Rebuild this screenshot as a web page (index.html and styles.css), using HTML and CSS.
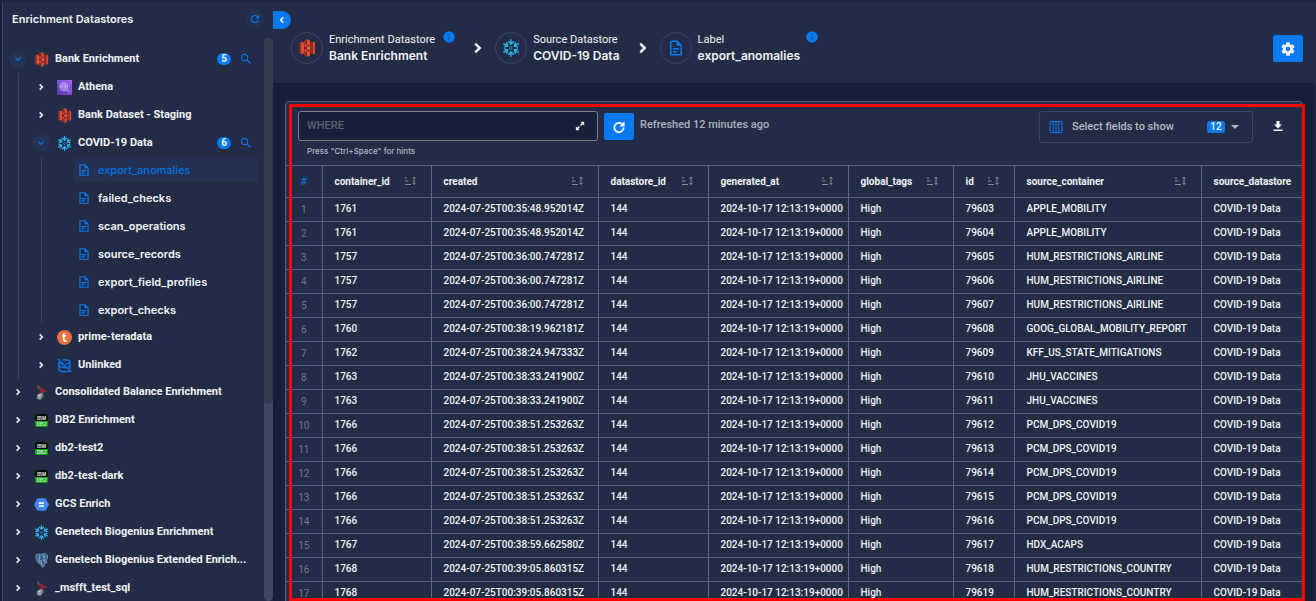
FILE: index.html
```html
<!DOCTYPE html>
<html lang="en">
<head>
<meta charset="utf-8">
<title>export_anomalies</title>
<link rel="stylesheet" href="styles.css">
</head>
<body>
<svg class="sprite" aria-hidden="true">
  <symbol id="down" viewBox="0 0 24 24"><path fill="currentColor" d="M7.400 8.600 12 13.200l4.600-4.600L18 10l-6 6-6-6z"/></symbol>
  <symbol id="right" viewBox="0 0 24 24"><path fill="none" stroke="currentColor" stroke-width="4.600" d="M8 4l8 8-8 8"/></symbol>
  <symbol id="left" viewBox="0 0 24 24"><path fill="none" stroke="currentColor" stroke-width="4.600" d="M16 4l-8 8 8 8"/></symbol>
  <symbol id="refresh" viewBox="0 0 24 24"><path fill="currentColor" d="M17.650 6.350A7.950 7.950 0 0 0 12 4a8 8 0 1 0 7.730 10h-2.080A6 6 0 1 1 12 6c1.660 0 3.140.69 4.220 1.780L13 11h7V4z"/></symbol>
  <symbol id="refresh-bold" viewBox="0 0 24 24"><path fill="none" stroke="currentColor" stroke-width="3.200" d="M18 7.500A8 8 0 1 0 20 13"/><path fill="currentColor" d="M21.500 2v9h-9z"/></symbol>
  <symbol id="search" viewBox="0 0 24 24"><path fill="currentColor" d="M9.500 3a6.500 6.500 0 0 1 4.940 10.730l.27.27h.79l5 5-1.500 1.500-5-5v-.79l-.27-.27A6.500 6.500 0 1 1 9.500 3m0 2a4.500 4.500 0 1 0 0 9 4.500 4.500 0 0 0 0-9"/></symbol>
  <symbol id="doc" viewBox="0 0 24 24"><path fill="currentColor" d="M6 2a2 2 0 0 0-2 2v16a2 2 0 0 0 2 2h12a2 2 0 0 0 2-2V8l-6-6zm0 2h7v5h5v11H6zm2 8v2h8v-2zm0 4v2h5v-2z"/></symbol>
  <symbol id="s3" viewBox="0 0 24 24"><path fill="#8c2b24" d="M1.500 5 4 3.800v16.400L1.500 19z"/><path fill="#dc4e3c" d="M4 3.800 12 6v12l-8 2.200z"/><path fill="#98291f" d="M12 6l8-2.200v16.400L12 18z"/><path fill="#dc4e3c" d="M20 3.800 22.500 5v14L20 20.200z"/><path fill="#98291f" d="M8 2l4-2v7l-4 1zM8 22l4 2v-7l-4-1z"/><path fill="#dc4e3c" d="M12 0l4 2v6l-4-1zM12 24l4-2v-6l-4 1z"/><path fill="#7b241e" d="M8 9.500l4 .7v3.600l-4 .7z"/><path fill="#e0604c" d="M12 10.200l4-.7v5l-4-.7z"/></symbol>
  <symbol id="snow" viewBox="0 0 24 24"><g fill="none" stroke="#29b5e8" stroke-width="2" stroke-linecap="round" stroke-linejoin="round"><path id="arm" d="M12 1v5.800M8.900 3.600 12 6.800l3.100-3.200"/><use href="#arm" transform="rotate(60 12 12)"/><use href="#arm" transform="rotate(120 12 12)"/><use href="#arm" transform="rotate(180 12 12)"/><use href="#arm" transform="rotate(240 12 12)"/><use href="#arm" transform="rotate(300 12 12)"/></g><path fill="none" stroke="#29b5e8" stroke-width="1.200" d="M12 10l2 2-2 2-2-2z"/></symbol>
  <symbol id="athena" viewBox="0 0 24 24"><linearGradient id="violet" x1="0" y1="1" x2="1" y2="0"><stop offset="0" stop-color="#5a32b4"/><stop offset="1" stop-color="#a667f5"/></linearGradient><path fill="url(#violet)" d="M0 0h24v24H0z"/><g fill="none" stroke="#d8c6f7" stroke-width="1.200"><circle cx="11" cy="10.500" r="6.300"/><path d="M15.500 15l4 4.500M4.700 10.500h3M14.500 10.500h3"/><ellipse cx="11" cy="8" rx="3" ry="1.200"/><path d="M8 8v5c0 2 6 2 6 0V8M8 10.700c0 1.600 6 1.600 6 0"/></g></symbol>
  <symbol id="teradata" viewBox="0 0 24 24"><circle cx="12" cy="12" r="12" fill="#e8713f"/><path fill="none" stroke="#fff" stroke-width="2.800" d="M11 5v10.500c0 2.200 1.500 2.700 4.200 2.200M8.500 9.300h6.200"/></symbol>
  <symbol id="unlinked" viewBox="0 0 24 24"><g fill="none" stroke="#0879ef" stroke-width="2.200"><path d="M8.500 3.500c5-1.500 12-.3 12 2.500 0 2-3.500 3.800-7.500 3.800M3 6v12.500c0 4 13 4.500 17 2M20.500 6v12M3 7C5 9.500 8 10 10 10M3 12.500c2 2.500 6 3 10.500 2.700M17 14.500l3.500-2M1 1l22 22"/></g></symbol>
  <symbol id="mssql" viewBox="0 0 24 24"><path fill="#a92830" d="M6 1c2 3 7 3 10 6l6 3-8 2-6 5 1-6 3-3-7-2z"/><path fill="#71505e" d="M5 0l4 2 2 6-5-3z"/><path fill="#74808f" d="M5 15l9-3 1 6-5 6-6-2z"/><path fill="#c7ced6" d="M7 16l5-2-2 4-4 1zM6 21l5-2-1 3z"/><path fill="none" stroke="#5b1f2b" d="M8 4l8 7M10 13l9-5"/></symbol>
  <symbol id="gcs" viewBox="0 0 24 24"><path fill="#4285f4" d="M6.500 2h11a2 2 0 0 1 1.700 1l4.500 8a2 2 0 0 1 0 2l-4.500 8a2 2 0 0 1-1.700 1h-11a2 2 0 0 1-1.700-1l-4.500-8a2 2 0 0 1 0-2l4.500-8a2 2 0 0 1 1.700-1"/><path fill="#fff" d="M8 8.500h8V11H8zM8 13h8v2.500H8z"/></symbol>
  <symbol id="pg" viewBox="0 0 24 24"><path fill="#336791" stroke="#8ea6bd" stroke-width="1.200" d="M3 3c3-2 7-1 9-1 3-1.500 8-1 9 1 2 3-1 9-2 11l2 1-4 1.500c0 3-1 6-3 6s-3-2-3-6c-1 1-2 1-3 0-3-1-6-10-5-13.500z"/><path fill="none" stroke="#c5d3e0" stroke-width="1.100" d="M9 4c-1.500 3-.5 6 0 8l-1 3M14 3c3 2 3 5 2 8l1 3M11 12c1 1.500.5 4 1 7"/></symbol>
  <symbol id="sort" viewBox="0 0 24 20"><g fill="none" stroke="currentColor" stroke-width="2"><path d="M2 4h4M2 10h7M2 17h12M20 2v15M17 5l3-3 3 3M17 14l3 3 3-3"/></g></symbol>
  <symbol id="info" viewBox="0 0 24 24"><circle cx="12" cy="12" r="11.500" fill="#067af2"/><path fill="#213c71" d="M11 6h2v2h-2zM11 10.500h2v7h-2z"/></symbol>
  <symbol id="gear" viewBox="0 0 24 24"><path fill="currentColor" fill-rule="evenodd" d="M12 15.500a3.500 3.500 0 1 1 0-7 3.500 3.500 0 0 1 0 7m7.430-2.530a7.800 7.800 0 0 0 0-1.940l2.110-1.630a.5.5 0 0 0 .12-.64l-2-3.460a.5.5 0 0 0-.61-.22l-2.490 1a7.300 7.300 0 0 0-1.690-.98l-.37-2.650A.5.5 0 0 0 14 2h-4a.5.5 0 0 0-.5.42l-.37 2.650c-.63.25-1.170.59-1.690.98l-2.490-1a.5.5 0 0 0-.61.220l-2 3.460a.5.5 0 0 0 .12.640L4.570 11a7.900 7.900 0 0 0 0 1.940l-2.110 1.690a.5.5 0 0 0-.12.640l2 3.460c.12.220.39.300.61.220l2.490-1.010c.52.400 1.060.740 1.690.990l.37 2.650c.04.240.250.420.500.420h4c.25 0 .46-.18.500-.42l.37-2.650a7 7 0 0 0 1.690-.99l2.490 1.010c.220.080.490 0 .61-.22l2-3.460a.5.5 0 0 0-.12-.64z"/></symbol>
  <symbol id="expand" viewBox="0 0 24 24"><path fill="currentColor" d="M13 2h9v9l-3.200-3.200-4 4-2.600-2.600 4-4zM11 22H2v-9l3.200 3.200 4-4 2.600 2.600-4 4z"/></symbol>
  <symbol id="columns" viewBox="0 0 26 24"><path fill="none" stroke="currentColor" stroke-width="2" d="M1 1h24v22H1zM7.500 1v22M13 1v22M18.500 1v22"/></symbol>
  <symbol id="download" viewBox="0 0 24 24"><path fill="currentColor" d="M9 2h6v7h5l-8 8-8-8h5zM3 19h18v3H3z"/></symbol>
  <symbol id="caret" viewBox="0 0 24 12"><path fill="currentColor" d="M0 0h24L12 12z"/></symbol>
</svg>
<div class="app">
  <aside class="sidebar">
    <header class="side-head">
      <h1>Enrichment Datastores</h1>
      <button class="round" aria-label="Reload"><svg class="i12"><use href="#refresh"/></svg></button>
    </header>
    <div class="side-body">
      <ul class="tree">
        <li>
          <div class="node"><button class="round" aria-label="Collapse"><svg class="i12"><use href="#down"/></svg></button><svg class="i15"><use href="#s3"/></svg><a href="#">Bank Enrichment</a><span class="count">5</span><button class="find" aria-label="Search"><svg class="i14"><use href="#search"/></svg></button></div>
          <ul class="branch">
            <li class="node"><button class="tog" aria-label="Expand"><svg class="i8"><use href="#right"/></svg></button><svg class="i15"><use href="#athena"/></svg><a href="#">Athena</a></li>
            <li class="node"><button class="tog" aria-label="Expand"><svg class="i8"><use href="#right"/></svg></button><svg class="i15"><use href="#s3"/></svg><a href="#">Bank Dataset - Staging</a></li>
            <li>
              <div class="node"><button class="round" aria-label="Collapse"><svg class="i12"><use href="#down"/></svg></button><svg class="i15"><use href="#snow"/></svg><a href="#">COVID-19 Data</a><span class="count">6</span><button class="find" aria-label="Search"><svg class="i14"><use href="#search"/></svg></button></div>
              <ul class="leaves">
                <li><a class="leaf active" href="#"><svg class="i14"><use href="#doc"/></svg>export_anomalies</a></li>
                <li><a class="leaf" href="#"><svg class="i14"><use href="#doc"/></svg>failed_checks</a></li>
                <li><a class="leaf" href="#"><svg class="i14"><use href="#doc"/></svg>scan_operations</a></li>
                <li><a class="leaf" href="#"><svg class="i14"><use href="#doc"/></svg>source_records</a></li>
                <li><a class="leaf" href="#"><svg class="i14"><use href="#doc"/></svg>export_field_profiles</a></li>
                <li><a class="leaf" href="#"><svg class="i14"><use href="#doc"/></svg>export_checks</a></li>
              </ul>
            </li>
            <li class="node"><button class="tog" aria-label="Expand"><svg class="i8"><use href="#right"/></svg></button><svg class="i15"><use href="#teradata"/></svg><a href="#">prime-teradata</a></li>
            <li class="node"><button class="tog" aria-label="Expand"><svg class="i8"><use href="#right"/></svg></button><svg class="i15"><use href="#unlinked"/></svg><a href="#">Unlinked</a></li>
          </ul>
        </li>
        <li class="node"><button class="tog" aria-label="Expand"><svg class="i8"><use href="#right"/></svg></button><svg class="i15"><use href="#mssql"/></svg><a href="#">Consolidated Balance Enrichment</a></li>
        <li class="node"><button class="tog" aria-label="Expand"><svg class="i8"><use href="#right"/></svg></button><span class="db2"><b>IBM</b><b>DB2</b></span><a href="#">DB2 Enrichment</a></li>
        <li class="node"><button class="tog" aria-label="Expand"><svg class="i8"><use href="#right"/></svg></button><span class="db2"><b>IBM</b><b>DB2</b></span><a href="#">db2-test2</a></li>
        <li class="node"><button class="tog" aria-label="Expand"><svg class="i8"><use href="#right"/></svg></button><span class="db2"><b>IBM</b><b>DB2</b></span><a href="#">db2-test-dark</a></li>
        <li class="node"><button class="tog" aria-label="Expand"><svg class="i8"><use href="#right"/></svg></button><svg class="i15"><use href="#gcs"/></svg><a href="#">GCS Enrich</a></li>
        <li class="node"><button class="tog" aria-label="Expand"><svg class="i8"><use href="#right"/></svg></button><svg class="i15"><use href="#snow"/></svg><a href="#">Genetech Biogenius Enrichment</a></li>
        <li class="node"><button class="tog" aria-label="Expand"><svg class="i8"><use href="#right"/></svg></button><svg class="i15"><use href="#pg"/></svg><a href="#">Genetech Biogenius Extended Enrich...</a></li>
        <li class="node"><button class="tog" aria-label="Expand"><svg class="i8"><use href="#right"/></svg></button><svg class="i15"><use href="#mssql"/></svg><a href="#">_msfft_test_sql</a></li>
      </ul>
      <div class="track"><div class="thumb"></div></div>
    </div>
  </aside>
  <div class="content">
    <header class="top">
      <nav class="crumbs" aria-label="Breadcrumb">
        <div class="crumb"><span class="ring"><svg class="i18"><use href="#s3"/></svg></span><a href="#"><small>Enrichment Datastore <svg class="info"><use href="#info"/></svg></small><strong>Bank Enrichment</strong></a></div>
        <svg class="sep"><use href="#right"/></svg>
        <div class="crumb"><span class="ring"><svg class="i18"><use href="#snow"/></svg></span><a href="#"><small>Source Datastore</small><strong>COVID-19 Data</strong></a></div>
        <svg class="sep"><use href="#right"/></svg>
        <div class="crumb"><span class="ring blue"><svg class="i18"><use href="#doc"/></svg></span><a href="#"><small>Label</small><strong>export_anomalies</strong></a><svg class="info side"><use href="#info"/></svg></div>
      </nav>
      <button class="solid" aria-label="Settings"><svg class="i16"><use href="#gear"/></svg></button>
      <button class="collapse" aria-label="Hide sidebar"><svg class="i8"><use href="#left"/></svg></button>
    </header>
    <main class="main">
      <section class="card">
        <div class="tools">
          <div class="query">
            <div class="where"><input type="text" id="where" placeholder="WHERE" aria-label="Where" aria-describedby="hint"><button aria-label="Enlarge editor"><svg class="i10"><use href="#expand"/></svg></button></div>
            <p id="hint">Press "Ctrl+Space" for hints</p>
          </div>
          <button class="solid" aria-label="Refresh"><svg class="i14"><use href="#refresh-bold"/></svg></button>
          <p class="status">Refreshed 12 minutes ago</p>
          <div class="fields"><svg class="cols"><use href="#columns"/></svg><select aria-label="Fields"><option>Select fields to show</option></select><span class="tag">12</span><svg class="caret"><use href="#caret"/></svg></div>
          <button class="get" aria-label="Download"><svg class="i12"><use href="#download"/></svg></button>
        </div>
        <table>
          <colgroup><col class="c-n"><col class="c-m"><col class="c-created"><col class="c-store"><col class="c-gen"><col class="c-tags"><col class="c-id"><col class="c-src"><col></colgroup>
          <thead><tr>
            <th class="num">#</th>
            <th><div>container_id<svg><use href="#sort"/></svg></div></th>
            <th><div>created<svg><use href="#sort"/></svg></div></th>
            <th><div>datastore_id<svg><use href="#sort"/></svg></div></th>
            <th><div>generated_at<svg><use href="#sort"/></svg></div></th>
            <th><div>global_tags<svg><use href="#sort"/></svg></div></th>
            <th><div>id<svg><use href="#sort"/></svg></div></th>
            <th><div>source_container<svg><use href="#sort"/></svg></div></th>
            <th><div>source_datastore</div></th>
          </tr></thead>
          <tbody id="rows"></tbody>
        </table>
      </section>
      <div class="highlight"></div>
    </main>
  </div>
</div>
<script src="rows.js"></script>
</body>
</html>
```
FILE: rows.js
```js
const records = [
  ['1761', '00:35:48.952014Z', 'APPLE_MOBILITY'],
  ['1761', '00:35:48.952014Z', 'APPLE_MOBILITY'],
  ['1757', '00:36:00.747281Z', 'HUM_RESTRICTIONS_AIRLINE'],
  ['1757', '00:36:00.747281Z', 'HUM_RESTRICTIONS_AIRLINE'],
  ['1757', '00:36:00.747281Z', 'HUM_RESTRICTIONS_AIRLINE'],
  ['1760', '00:38:19.962181Z', 'GOOG_GLOBAL_MOBILITY_REPORT'],
  ['1762', '00:38:24.947333Z', 'KFF_US_STATE_MITIGATIONS'],
  ['1763', '00:38:33.241900Z', 'JHU_VACCINES'],
  ['1763', '00:38:33.241900Z', 'JHU_VACCINES'],
  ['1766', '00:38:51.253263Z', 'PCM_DPS_COVID19'],
  ['1766', '00:38:51.253263Z', 'PCM_DPS_COVID19'],
  ['1766', '00:38:51.253263Z', 'PCM_DPS_COVID19'],
  ['1766', '00:38:51.253263Z', 'PCM_DPS_COVID19'],
  ['1766', '00:38:51.253263Z', 'PCM_DPS_COVID19'],
  ['1767', '00:38:59.662580Z', 'HDX_ACAPS'],
  ['1768', '00:39:05.860315Z', 'HUM_RESTRICTIONS_COUNTRY'],
  ['1768', '00:39:05.860315Z', 'HUM_RESTRICTIONS_COUNTRY']
];
const body = document.getElementById('rows');
records.forEach(([container, time, source], i) => {
  const row = body.insertRow();
  const cells = [i + 1, container, '2024-07-25T' + time, '144', '2024-10-17 12:13:19+0000',
    'High', 79603 + i, source, 'COVID-19 Data'];
  cells.forEach(value => { row.insertCell().textContent = value; });
  row.cells[0].className = 'num';
});
```
FILE: styles.css
```css
* { box-sizing: border-box; }
html, body { height: 100%; margin: 0; }
body { overflow: hidden; background: #162039; color: #f2f4f8; font: 500 11px/16px Roboto, "Liberation Sans", sans-serif; }
ul { list-style: none; margin: 0; padding: 0; }
h1, p { margin: 0; }
a { color: inherit; text-decoration: none; }
button { display: grid; place-items: center; padding: 0; border: 0; background: none; color: inherit; font: inherit; cursor: pointer; }
svg { display: block; flex: none; }
.sprite { position: absolute; width: 0; height: 0; }
.i8 { width: 8px; height: 10px; }
.i10 { width: 10px; height: 10px; }
.i12 { width: 12px; height: 12px; }
.i14 { width: 14px; height: 14px; }
.i15 { width: 15px; height: 15px; }
.i16 { width: 16px; height: 16px; }
.i18 { width: 18px; height: 18px; }

.app { display: grid; grid-template-columns: 273px minmax(0, 1fr); height: 100vh; border-top: 2px solid #1c2540; }

.sidebar { display: flex; flex-direction: column; min-height: 0; margin-left: 2px; background: #232c46; border-left: 1px solid #3b445c; overflow: hidden; }
.side-head { display: flex; align-items: center; justify-content: space-between; height: 34px; flex: none; padding: 0 9px; }
h1 { font: 600 11px/16px Inter, sans-serif; }
.round { width: 18px; height: 18px; border-radius: 50%; background: #233356; color: #087cf5; flex: none; }
.side-body { display: flex; flex: 1; min-height: 0; margin-top: 2px; }
.tree { flex: 1; min-width: 0; padding: 7px 6px 0; }
.node { display: flex; align-items: center; height: 28px; font-weight: 700; }
.node > svg { margin: 0 6px 0 7px; }
.node > a { flex: 1; white-space: nowrap; }
.tog { width: 18px; height: 18px; flex: none; }
.db2 { width: 13px; margin: 0 7px 0 8px; border-radius: 2px; overflow: hidden; background: #04a30c; color: #dfe6df; font: 700 5px/6px "Liberation Sans", sans-serif; text-align: center; }
.db2 b { display: block; }
.db2 b:first-child { padding-top: 1px; background: #050706; }
.count { min-width: 14px; height: 12px; padding: 0 4px; border-radius: 6px; background: #067af2; font-size: 10px; line-height: 12px; text-align: center; }
.find { margin: 0 5px 0 8px; color: #087cf5; }
.branch { margin: 0 0 -1px 9px; padding-left: 13px; border-left: 1px solid #3b445c; }
.leaves { margin: 0 0 -2px 9px; padding-left: 32px; border-left: 1px solid #3b445c; }
.leaf { display: flex; align-items: center; gap: 7px; height: 25px; margin: 0 0 3px; padding-left: 3px; border-radius: 2px; font: 600 11px/16px Inter, sans-serif; white-space: nowrap; }
.leaf svg { color: #087cf5; }
.leaf.active { background: #243154; color: #0872e2; font-weight: 500; }
.track { width: 9px; border-radius: 5px; background: #414860; }
.thumb { height: 65%; border-radius: 5px; background: #353a50; }

.content { display: flex; flex-direction: column; min-width: 0; min-height: 0; border-right: 1px solid #232c46; }
.top { position: relative; display: flex; align-items: center; justify-content: space-between; flex: none; height: 81px; padding: 12px 12px 0 18px; background: #232c46; }
.collapse { position: absolute; left: 0; top: 9px; width: 18px; height: 18px; border-radius: 0 9px 9px 0; background: #067af2; }
.crumbs { display: flex; align-items: center; padding-bottom: 2px; }
.crumb { display: flex; align-items: center; gap: 6px; }
.ring { display: grid; place-items: center; width: 32px; height: 32px; border: 1px solid #3b445c; border-radius: 50%; }
.blue { color: #087cf5; }
small { display: flex; gap: 8px; font-size: 11px; font-weight: 400; line-height: 17px; }
strong { display: block; font: 600 12px/16px Inter, sans-serif; }
.info { width: 12px; height: 12px; }
.side { align-self: flex-start; }
.sep { width: 13px; height: 16px; margin: 0 11px 0 16px; }
.solid { width: 30px; height: 27px; border-radius: 2px; background: #067af2; flex: none; }

.main { position: relative; flex: 1; min-height: 0; padding: 18px 12px 0; overflow: hidden; }
.card { min-height: 100%; border: 1px solid #5c6379; border-radius: 4px 4px 0 0; background: #232c46; overflow: hidden; }
.highlight { position: absolute; inset: 21px 10px 0 16px; border: 3px solid #ff0000; }
.tools { display: flex; align-items: flex-start; gap: 6px; height: 63px; padding: 9px 18px 0 12px; }
.query { width: 300px; }
.where { display: flex; align-items: center; height: 30px; padding: 0 12px 0 8px; border: 1px solid #7d8088; border-radius: 3px; background: #162039; }
.where input { flex: 1; min-width: 0; padding: 0; border: 0; outline: 0; background: none; color: inherit; font: inherit; }
.where input::placeholder { color: #5c6478; opacity: 1; }
#hint { padding: 2px 9px; color: #b5bac7; font: 500 8px/16px Inter, sans-serif; }
.tools .solid { margin-top: 2px; }
.status { padding-top: 6px; color: #adb2c0; white-space: nowrap; }
.fields { display: flex; align-items: center; width: 214px; height: 32px; margin-left: auto; padding: 0 13px 0 9px; border: 1px solid #3d4560; border-radius: 3px; }
.cols { width: 14px; height: 12px; color: #087cf5; }
.fields select { flex: 1; min-width: 0; margin-left: 9px; padding: 0; border: 0; appearance: none; background: none; color: #b5bac7; font: inherit; }
.tag { width: 18px; height: 12px; border-radius: 3px; background: #067af2; font-size: 10px; line-height: 12px; text-align: center; }
.caret { width: 8px; height: 4px; margin-left: 6px; color: #adb2c0; }
.get { margin: 9px 0 0 13px; }

table { width: 100%; table-layout: fixed; border-collapse: collapse; font: 500 10px/12px Roboto, sans-serif; }
.c-n { width: 36px; }
.c-m { width: 109px; }
.c-created { width: 167px; }
.c-store { width: 110px; }
.c-gen { width: 140px; }
.c-tags { width: 105px; }
.c-id { width: 61px; }
.c-src { width: 187px; }
th, td { padding: 0 0 0 12px; border: 1px solid #5c6379; text-align: left; white-space: nowrap; }
th:first-child, td:first-child { border-left: 0; }
th:last-child, td:last-child { border-right: 0; }
th { height: 32px; font-weight: 700; }
td { height: 24px; padding-bottom: 1px; }
th div { display: flex; justify-content: space-between; padding-right: 15px; }
th svg { width: 12px; height: 10px; color: #8c8f98; }
th:last-child div { padding: 0; }
td.num { padding: 0; text-align: center; color: #737b8e; font-weight: 400; }
th.num { padding: 0; text-align: center; color: #0872e2; font-weight: 500; }
```
